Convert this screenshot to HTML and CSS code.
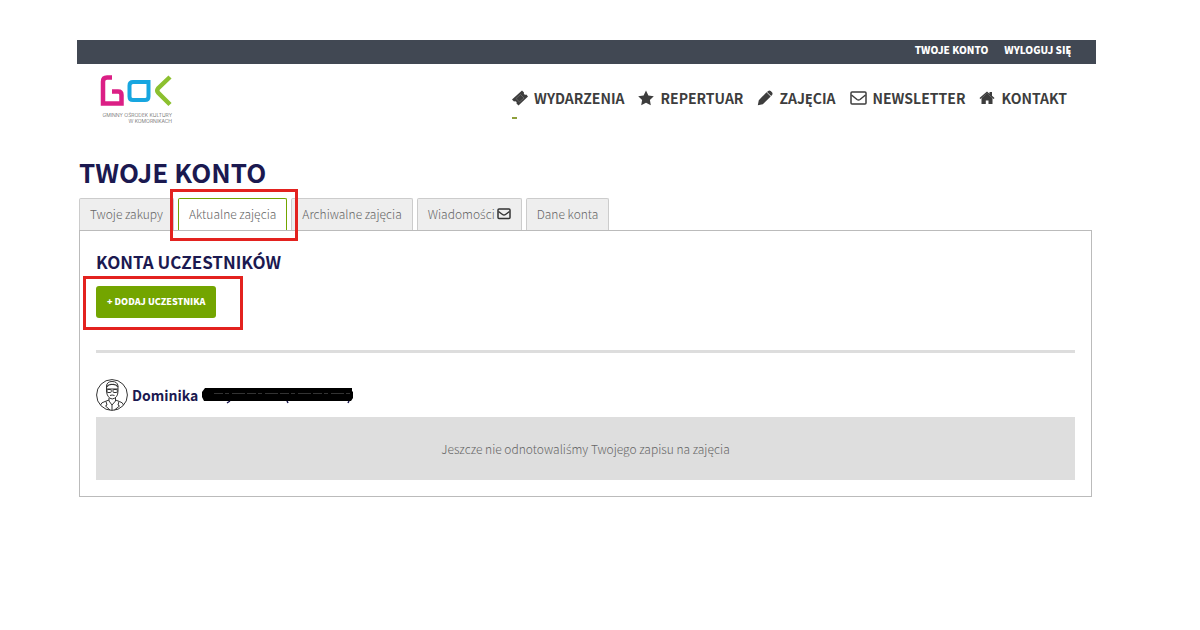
FILE: index.html
```html
<!DOCTYPE html>
<html lang="pl">
<head>
    <meta charset="UTF-8">
    <meta name="viewport" content="width=device-width, initial-scale=1.0">
    <title>Twoje konto - GOK</title>
    <link rel="stylesheet" href="styles.css">
</head>
<body>

<div class="page">
    <header>
        <!-- Top bar -->
        <nav class="top-bar">
            <a href="#">TWOJE KONTO</a>
            <a href="#">WYLOGUJ SIĘ</a>
        </nav>

        <div class="header-main">
            <a class="logo" href="#">
                <svg width="72" height="32" viewBox="0 0 72 32" fill="none" stroke-width="4" aria-label="GOK">
                    <path d="M12 2.500H7Q3 2.500 3 6.500V28.500H21.500V20Q21.500 16.500 18 16.500H12" stroke="#db1f85" stroke-width="4.500"/>
                    <path d="M33 7H48.500V21.500Q48.500 25 45 25H33Q29.500 25 29.500 21.500V10.500Q29.500 7 33 7Z" stroke="#17a6e0"/>
                    <path d="M70 2L58 13.500Q56.500 15.500 58 17.500L70 29.500" stroke="#8cc02f" stroke-width="4.500"/>
                </svg>
                <span class="logo-text">GMINNY OŚRODEK KULTURY<br>W KOMORNIKACH</span>
            </a>

            <nav class="main-nav">
                <a class="current" href="#">
                    <svg width="16" height="16" viewBox="0 0 16 16"><path fill="currentColor" d="M10 0.500L12 2.500Q11.500 4 12.500 4.500Q13.500 5 14.300 4.500L16 6.500L6.500 15.500L4.500 13.500Q5 12 4 11.500Q3 11 2 11.500L0 9.500Z"/><path stroke="#999" stroke-width="0.400" fill="none" d="M8.500 4.500L12 8L7.500 12L4 8.500Z"/></svg>
                    WYDARZENIA
                </a>
                <a href="#">
                    <svg width="16" height="16" viewBox="0 0 16 16"><path fill="currentColor" d="M8 0.500L10.400 5.400L15.800 6.200L11.900 10L12.800 15.300L8 12.800L3.200 15.300L4.100 10L0.200 6.200L5.600 5.400Z"/></svg>
                    REPERTUAR
                </a>
                <a href="#">
                    <svg width="16" height="16" viewBox="0 0 16 16"><path fill="currentColor" d="M0.800 15.200L1.800 10.200L9.500 2.300L13.700 6.500L5.800 14.200ZM10 1.900L11.200 0.900Q12.500 0 13.700 1L15 2.300Q16 3.500 15.200 4.700L14.200 6Z"/></svg>
                    ZAJĘCIA
                </a>
                <a href="#">
                    <svg width="17" height="16" viewBox="0 0 17 16" fill="none" stroke="currentColor" stroke-width="1.500"><rect x="1" y="2" width="15" height="12" rx="1"/><path d="M1.500 5L7 9.500Q8.500 10.500 10 9.500L15.500 5"/></svg>
                    NEWSLETTER
                </a>
                <a href="#">
                    <svg width="16" height="16" viewBox="0 0 16 16" fill="currentColor"><path d="M0.500 8L8 1.500L10.500 3.700V2H13V5.800L15.500 8L14.700 9L8 3.400L1.300 9Z"/><path d="M2.500 8L8 3.200L13.500 8V14H9.500V10.500H6.800V14H2.500Z"/></svg>
                    KONTAKT
                </a>
            </nav>
        </div>
    </header>

    <main>
        <h1>TWOJE KONTO</h1>

        <!-- Account tabs -->
        <ul class="tabs">
            <li><a href="#">Twoje zakupy</a></li>
            <li class="active marked"><a href="#">Aktualne zajęcia</a></li>
            <li><a href="#">Archiwalne zajęcia</a></li>
            <li><a href="#">Wiadomo<span class="accent">ś</span>ci<svg class="mail" width="14" height="12" viewBox="0 0 14 12" fill="none" stroke="#333" stroke-width="1.500"><rect x="1" y="1" width="12" height="9.500" rx="1"/><path d="M1.500 3.500L5.500 6.500Q7 7.600 8.500 6.500L12.500 3.500"/></svg></a></li>
            <li><a href="#">Dane konta</a></li>
        </ul>

        <div class="panel">
            <h2>KONTA UCZESTNIKÓW</h2>
            <div class="add-row">
                <button class="add-btn" type="button">+ DODAJ UCZESTNIKA</button>
            </div>

            <hr>

            <h3 class="person">
                <svg width="32" height="34" viewBox="0 0 32 34" fill="none" stroke="#333" stroke-width="1">
                    <circle cx="16" cy="17" r="15.400"/>
                    <path d="M10.500 13V8Q11 3.500 16 3.500Q21.500 3.500 22 8V13Q22 20 16.200 21Q11 20 10.500 13Z"/>
                    <path d="M10.500 9Q13 6 16 6.500Q20 6 22 9M10.500 11H22" stroke-width="1.200"/>
                    <rect x="11" y="11.500" width="4.300" height="3" rx="1"/>
                    <rect x="17" y="11.500" width="4.300" height="3" rx="1"/>
                    <path d="M14 17.500Q16 16.500 18.500 17.500M13 20V23L16 27L19.500 23V20M13 22L9 23.500Q5 24.500 4.500 27M19.500 22L23.500 23.500Q27 24.500 27.500 27M10 23.500L11 27L9.500 28L14 32M23 23.500L22 27L23.500 28L18.500 32M16 27V32"/>
                </svg>
                Dominika
                <svg class="redacted" width="152" height="18" viewBox="0 0 152 18">
                    <path d="M3 2H150V5L151 6V12L149 15H2L0 11V6Z" fill="#000"/>
                    <path d="M12 7.500H148" stroke="#555" stroke-width="0.600" stroke-dasharray="9 2 4 3 13 2"/>
                    <path d="M28 15L25 17M85 15L86 17M147 15L146 17" stroke="#1b1950" stroke-width="1.500"/>
                </svg>
            </h3>
            <p class="empty">Jeszcze nie odnotowali<span class="accent">ś</span>my Twojego zapisu na zajęcia</p>
        </div>
    </main>
</div>

</body>
</html>
```
FILE: styles.css
```css
/* General page styling */
* {
    box-sizing: border-box;
}

body {
    font-family: "Noto Sans CJK SC", "Noto Sans", sans-serif;
    font-weight: 300;
    margin: 0;
    color: #666;
    background-color: #fff;
}

a {
    color: inherit;
    text-decoration: none;
}

svg {
    flex-shrink: 0;
}

/* The CJK family misplaces the accent on this letter */
.accent {
    font-family: "Open Sans", "Noto Sans", sans-serif;
    line-height: 1;
}

.page {
    padding: 40px 104px 0 77px;
}

/* Header */
.top-bar {
    display: flex;
    justify-content: flex-end;
    gap: 16px;
    padding: 0 25px 4px;
    background-color: #414853;
    color: #fff;
    font-size: 10px;
    font-weight: 900;
    line-height: 20px;
}

.header-main {
    display: flex;
    justify-content: space-between;
    align-items: flex-start;
    padding: 11px 29px 0 23px;
}

.logo {
    display: flex;
    flex-direction: column;
}

.logo-text {
    font-family: Inter, sans-serif;
    font-size: 5px;
    line-height: 6px;
    margin-top: 5px;
    width: 72px;
    text-align: right;
    white-space: nowrap;
    color: #555;
}

.main-nav {
    display: flex;
    gap: 14px;
    padding-top: 13px;
    color: #3d3d3d;
    font-size: 14px;
    font-weight: 700;
    line-height: 20px;
}

.main-nav a {
    display: flex;
    align-items: center;
    gap: 6px;
}

.main-nav .current {
    position: relative;
}

.main-nav .current::after {
    content: "";
    position: absolute;
    left: 0;
    top: 29px;
    width: 5px;
    height: 2px;
    background-color: #8fa03c;
}

/* Content */
main {
    padding: 32px 4px 0 2px;
}

h1, h2, h3 {
    margin: 0;
    color: #1b1950;
    font-weight: 700;
}

h1 {
    font-size: 26px;
    line-height: 32px;
}

.tabs {
    display: flex;
    gap: 4px;
    margin: 10px 0 0;
    padding: 0;
    list-style: none;
    font-size: 12px;
    line-height: 30px;
}

.tabs li {
    position: relative;
    border: 1px solid #ccc;
    border-bottom: none;
    border-radius: 2px 2px 0 0;
    background-color: #eee;
}

.tabs a {
    display: block;
    height: 31px;
    padding: 0 10px;
}

.mail {
    margin-left: 2px;
    vertical-align: -1px;
}

.tabs .active {
    border-color: #73a500;
    background-color: #fff;
}

/* Red frames around the important elements */
.marked::after,
.add-row::after {
    content: "";
    position: absolute;
    border: 3px solid #e3221f;
    pointer-events: none;
    z-index: 1;
}

.marked::after {
    inset: -10px -12px -11px -9px;
}

.add-row::after {
    inset: -10px -27px -12px -13px;
}

.panel {
    border: 1px solid #bbb;
    padding: 16px;
}

h2 {
    font-size: 17px;
    line-height: 30px;
}

.add-row {
    position: relative;
    width: fit-content;
    margin-top: 9px;
}

.add-btn {
    display: block;
    padding: 0 11px;
    border: none;
    border-radius: 3px;
    background-color: #73a500;
    color: #fff;
    font-family: inherit;
    font-size: 9px;
    font-weight: 900;
    line-height: 32px;
    cursor: pointer;
}

hr {
    margin: 32px 0 25px;
    border: none;
    border-top: 3px solid #ddd;
}

.person {
    display: flex;
    align-items: center;
    gap: 4px;
    font-size: 14px;
    line-height: 34px;
}

.empty {
    margin: 5px 0 0;
    padding: 20px;
    background-color: #dedede;
    text-align: center;
    font-size: 12px;
    line-height: 23px;
}
```
